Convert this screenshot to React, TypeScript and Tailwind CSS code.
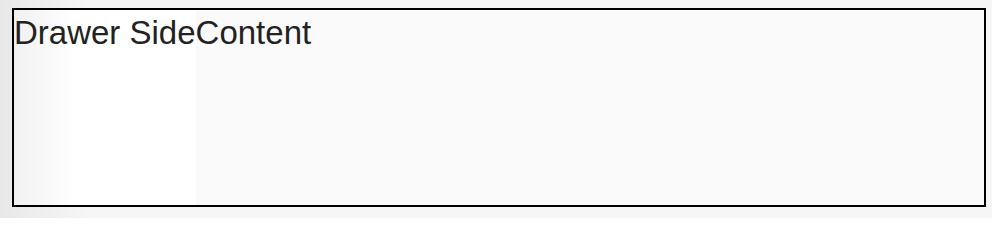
export default function App() {
  return (
    <div className="h-[218px] w-[992px] bg-[linear-gradient(to_right,#e8e8e8,#f6f6f6_90px)] pt-[8px] pl-[12px] font-['Liberation_Sans',Arial,sans-serif]">
      <div className="flex h-[199px] w-[974px] border-2 border-black bg-[#fafafa] text-[33px] leading-[45px] text-[#222]">
        <div className="bg-[linear-gradient(to_right,#f1f1f1,#ffffff_62px)]">Drawer Side</div>
        <div className="flex-1">Content</div>
      </div>
    </div>
  );
}
